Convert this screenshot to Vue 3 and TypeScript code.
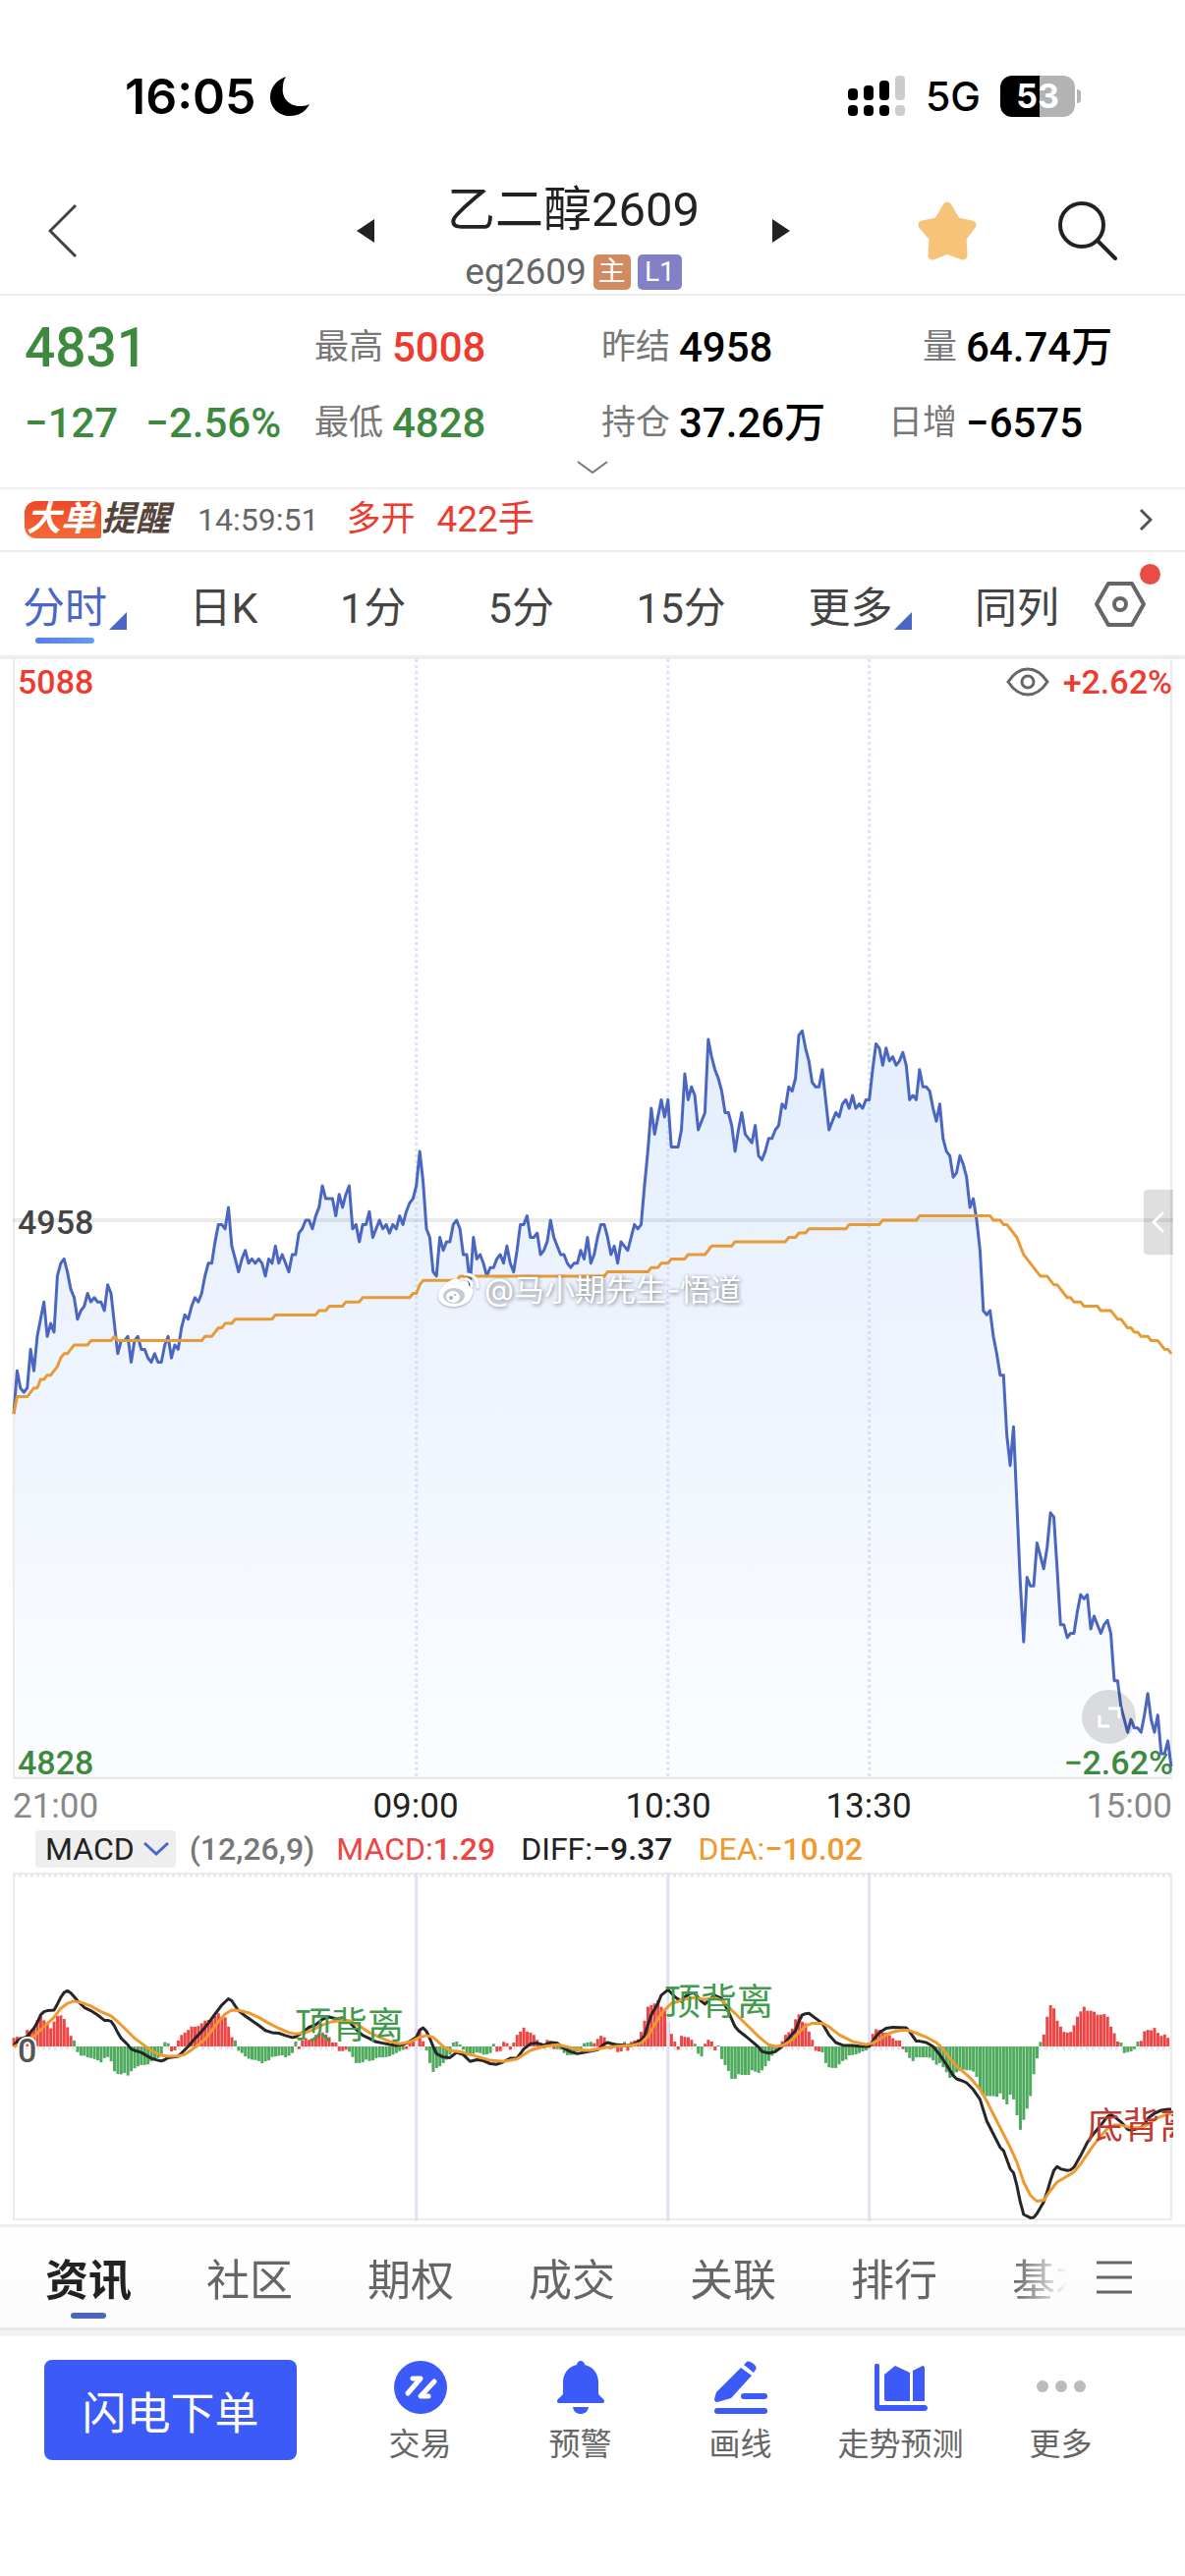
<script setup lang="ts">
import { ref } from 'vue'

interface Quote { label: string; value: string; tone: 'up' | 'down' | 'flat' }

const quotesTop: Quote[] = [
  { label: '最高', value: '5008', tone: 'up' },
  { label: '昨结', value: '4958', tone: 'flat' },
  { label: '量', value: '64.74万', tone: 'flat' },
]
const quotesBottom: Quote[] = [
  { label: '最低', value: '4828', tone: 'down' },
  { label: '持仓', value: '37.26万', tone: 'flat' },
  { label: '日增', value: '−6575', tone: 'flat' },
]

const periods = ['分时', '日K', '1分', '5分', '15分', '更多', '同列']
const activePeriod = ref('分时')
const sections = ['资讯', '社区', '期权', '成交', '关联', '排行', '基本']
const activeSection = ref('资讯')

// Minute-by-minute price, as an offset from the previous settlement.
const prices: number[] = [
  -45, -35, -39, -40, -39, -30, -35, -27, -23, -19, -27, -24, -26, -13, -10, -9, -12, -16, -18, -23,
  -21, -20, -17, -19, -18, -19, -19, -21, -15, -17, -24, -31, -28, -28, -27, -33, -28, -27, -30, -30,
  -32, -33, -31, -33, -33, -29, -27, -32, -29, -30, -25, -22, -23, -20, -18, -19, -17, -13, -10, -10,
  -5, -1, -1, -2, 3, -6, -9, -12, -9, -7, -10, -9, -10, -9, -10, -13, -9, -10, -6, -10,
  -8, -10, -12, -8, -8, -3, -2, 0, 0, -2, 1, 3, 8, 5, 5, 5, 1, 6, 3, 6,
  8, -2, -1, -5, -1, -1, 2, -4, -2, 0, -2, -1, -3, -1, -2, 1, -1, 2, 4, 5,
  8, 16, 9, -2, -4, -12, -13, -4, -7, -5, -5, -1, 0, -2, -8, -8, -15, -4, -9, -8,
  -10, -13, -11, -11, -9, -8, -10, -6, -10, -12, -7, -1, -1, 1, -4, -4, -3, -8, -7, -5,
  0, -4, -6, -8, -8, -10, -11, -10, -10, -7, -9, -4, -10, -8, -4, -1, -1, -4, -8, -6,
  -10, -5, -6, -7, -4, -1, -2, -1, 8, 16, 26, 20, 24, 28, 24, 28, 17, 17, 17, 21,
  34, 28, 31, 29, 21, 23, 25, 42, 38, 35, 33, 30, 25, 25, 22, 16, 21, 25, 20, 19,
  18, 22, 15, 14, 16, 19, 19, 21, 22, 27, 26, 31, 30, 33, 43, 44, 40, 37, 32, 31,
  31, 35, 28, 21, 23, 25, 24, 27, 28, 26, 29, 26, 27, 26, 28, 28, 35, 41, 40, 36,
  40, 37, 38, 36, 37, 39, 36, 28, 29, 28, 35, 31, 31, 30, 26, 23, 27, 19, 16, 15,
  10, 11, 15, 13, 10, 3, 5, 0, -7, -21, -22, -21, -27, -31, -36, -36, -50, -57, -48, -66,
  -84, -98, -83, -85, -85, -75, -78, -81, -76, -68, -69, -81, -94, -94, -97, -96, -96, -91, -87, -88,
  -87, -95, -92, -94, -96, -94, -93, -96, -107, -107, -113, -116, -119, -116, -118, -118, -119, -115, -110, -116,
  -119, -115, -124, -124, -121, -127,
]

type Knot = [number, number]

const average: Knot[] = [
  [0, -45], [1, -41], [4, -41], [5, -40], [6, -39], [7, -39], [8, -37], [9, -37], [10, -36], [11, -36], [12, -35],
  [13, -34], [14, -32], [15, -31], [16, -31], [17, -30], [18, -29], [22, -29], [23, -28], [29, -28], [30, -27], [31, -28],
  [56, -28], [57, -27], [59, -27], [60, -26], [61, -25], [62, -25], [63, -24], [65, -24], [66, -23], [77, -23], [78, -22],
  [90, -22], [91, -21], [93, -21], [94, -20], [98, -20], [99, -19], [103, -19], [104, -18], [118, -18], [119, -17],
  [120, -17], [121, -15], [122, -14], [132, -14], [133, -13], [176, -13], [177, -12], [189, -12], [190, -11], [192, -11],
  [193, -10], [195, -10], [196, -9], [200, -9], [201, -8], [206, -8], [207, -7], [208, -6], [214, -6], [215, -5],
  [230, -5], [231, -4], [233, -4], [234, -3], [236, -3], [237, -2], [248, -2], [249, -1], [258, -1], [259, 0], [269, 0],
  [270, 1], [291, 1], [292, 0], [294, 0], [295, -1], [296, -1], [297, -2], [298, -3], [299, -4], [300, -6], [301, -8],
  [302, -9], [303, -10], [304, -11], [305, -12], [306, -13], [308, -13], [309, -14], [310, -15], [311, -15], [312, -16],
  [313, -17], [314, -18], [315, -18], [316, -19], [318, -19], [319, -20], [323, -20], [324, -21], [327, -21], [328, -22],
  [329, -23], [330, -23], [331, -24], [332, -25], [333, -25], [334, -26], [335, -26], [336, -27], [338, -27], [339, -28],
  [341, -28], [342, -29], [343, -30], [344, -30], [345, -31],
]

// MACD histogram, one bar a minute.
const bars: number[] = [
  26, 29, 29, 30, 50, 42, 57, 80, 92, 79, 68, 55, 75, 92, 94, 83, 58, 32, 18, -17,
  -28, -28, -33, -35, -38, -42, -48, -35, -32, -45, -75, -83, -84, -80, -88, -75, -66, -60, -56, -56,
  -54, -45, -42, -35, -22, 13, 10, -15, -12, 18, 35, 42, 50, 60, 60, 62, 70, 78, 80, 80,
  92, 100, 90, 88, 60, 28, 18, -13, -20, -30, -37, -40, -41, -44, -51, -45, -42, -32, -30, -28,
  -27, -33, -28, -20, 15, -8, 18, 25, 20, 22, 35, 38, 42, 36, 28, 12, 12, -14, -14, -10,
  -16, -32, -50, -50, -48, -40, -44, -42, -36, -33, -33, -32, -30, -25, -20, -14, -10, -8, 12, 20,
  54, 50, 16, -12, -50, -77, -65, -60, -50, -40, -25, 12, 15, 6, -10, -28, -28, -22, -18, -20,
  -25, -24, -20, 8, -16, -14, 14, 10, -10, 12, 35, 45, 57, 45, 42, 35, 20, 10, -6, 20,
  16, -8, -8, -10, -20, -26, -26, -25, -15, -10, 10, 12, 14, 10, 23, 32, 28, -5, -8, 12,
  -17, -15, 14, -13, 14, 18, 22, 44, 78, 120, 125, 130, 140, 120, 112, 72, 38, 15, -10, 32,
  29, 28, 20, 8, -22, -30, 8, 20, 15, -12, 3, -38, -56, -74, -98, -98, -84, -86, -86, -86,
  -72, -76, -80, -72, -60, -44, -28, -15, -5, 16, 35, 43, 54, 82, 97, 75, 70, 45, 20, -13,
  -15, -18, -50, -63, -65, -65, -54, -44, -40, -27, -26, -24, -20, -15, -12, -5, 38, 52, 50, 42,
  42, 34, 25, 18, 18, -8, -18, -35, -44, -33, -33, -33, -33, -34, -42, -55, -50, -63, -78, -95,
  -92, -78, -74, -70, -72, -72, -76, -92, -130, -148, -150, -150, -150, -152, -142, -160, -175, -146, -160, -208,
  -252, -222, -188, -150, -84, -36, 14, 36, 90, 125, 115, 78, 60, 44, 42, 44, 64, 90, 106, 120,
  108, 108, 105, 96, 96, 98, 90, 60, 40, 15, 12, -20, -17, -15, -8, 15, 17, 46, 50, 49,
  56, 41, 32, 36, 26,
]
const turning = new Set([
  18, 45, 46, 47, 48, 66, 84, 85, 97, 98, 99, 117, 131, 132, 133, 143, 144, 145, 148, 161, 170, 171, 172, 178, 179,
  180, 181, 182, 183, 198, 203, 209, 210, 239, 240, 265, 306, 330, 335,
])

const diff: Knot[] = [
  [0, 3], [1, 15], [2, 22], [4, 30], [5, 43], [6, 55], [7, 72], [8, 95], [9, 105], [10, 108], [12, 110], [13, 128],
  [14, 148], [15, 163], [16, 168], [17, 162], [18, 150], [19, 138], [20, 128], [21, 118], [23, 108], [25, 95], [27, 79],
  [28, 79], [29, 76], [30, 62], [31, 42], [32, 25], [34, 5], [35, -8], [36, -12], [38, -18], [41, -36], [43, -42],
  [44, -44], [45, -40], [46, -34], [49, -30], [50, -20], [52, 0], [54, 24], [56, 45], [58, 70], [60, 98], [62, 125],
  [64, 144], [65, 138], [66, 122], [67, 108], [69, 92], [71, 78], [73, 64], [75, 48], [77, 42], [79, 40], [81, 33],
  [83, 27], [84, 29], [86, 42], [88, 58], [90, 66], [92, 82], [94, 89], [96, 84], [98, 82], [100, 74], [102, 52],
  [104, 34], [106, 24], [108, 14], [110, 10], [112, 6], [114, 3], [116, 5], [118, 15], [120, 28], [121, 50], [122, 56],
  [123, 46], [124, 25], [125, 0], [126, -22], [128, -32], [130, -34], [132, -18], [134, -25], [136, -45], [138, -40],
  [140, -43], [142, -52], [144, -54], [146, -46], [148, -36], [150, -35], [152, -8], [154, 8], [156, 10], [158, 4],
  [160, 12], [162, 10], [164, -6], [166, -16], [168, -22], [170, -18], [172, -14], [174, -10], [176, 8], [177, 12],
  [179, 6], [182, 4], [184, 3], [186, 14], [187, 20], [188, 32], [189, 65], [190, 95], [192, 130], [193, 155],
  [195, 171], [196, 162], [197, 150], [199, 136], [200, 150], [202, 162], [203, 160], [205, 136], [206, 128],
  [208, 148], [209, 154], [211, 145], [213, 105], [215, 60], [216, 48], [218, 32], [220, 15], [222, -2], [223, -15],
  [225, -20], [227, -16], [229, 0], [231, 25], [233, 48], [234, 75], [235, 95], [236, 99], [237, 100], [239, 85],
  [241, 70], [243, 35], [245, 12], [247, 4], [250, 3], [252, 1], [255, 0], [257, 30], [258, 42], [260, 55], [262, 58],
  [264, 57], [266, 56], [267, 45], [269, 16], [270, 16], [272, 12], [274, 0], [276, -25], [278, -55], [280, -88],
  [281, -98], [283, -105], [284, -110], [286, -130], [288, -160], [290, -225], [292, -265], [294, -305], [295, -315],
  [297, -370], [298, -382], [299, -420], [300, -470], [301, -508], [303, -518], [304, -517], [305, -505], [307, -470],
  [308, -440], [309, -405], [310, -375], [311, -363], [312, -370], [314, -375], [315, -373], [316, -365], [318, -330],
  [320, -290], [322, -262], [324, -238], [326, -212], [327, -207], [328, -212], [330, -228], [332, -250], [333, -253],
  [336, -246], [337, -235], [338, -218], [340, -202], [342, -193], [344, -190], [345, -190],
]
const dea: Knot[] = [
  [0, 0], [3, 10], [6, 30], [9, 60], [12, 88], [14, 115], [16, 130], [18, 137], [20, 133], [23, 122], [26, 105],
  [29, 92], [31, 75], [34, 45], [36, 25], [38, 10], [40, -5], [42, -18], [44, -27], [46, -30], [49, -29], [51, -24],
  [53, -10], [55, 5], [57, 22], [59, 48], [61, 75], [63, 98], [65, 110], [67, 109], [70, 102], [73, 88], [76, 70],
  [79, 55], [82, 42], [84, 38], [87, 42], [89, 50], [92, 65], [95, 75], [98, 79], [100, 78], [103, 62], [106, 42],
  [109, 28], [112, 15], [115, 8], [118, 13], [121, 28], [123, 33], [125, 28], [128, 0], [130, -12], [132, -15],
  [134, -18], [138, -30], [142, -42], [146, -45], [150, -38], [154, -12], [158, 0], [162, 5], [166, -4], [170, -12],
  [172, -12], [176, -4], [180, 1], [184, 3], [187, 10], [189, 30], [191, 65], [193, 100], [195, 120], [196, 130],
  [198, 136], [200, 143], [203, 148], [206, 142], [209, 147], [211, 140], [213, 120], [216, 90], [219, 60], [222, 30],
  [225, 5], [227, 0], [229, 2], [232, 20], [234, 42], [236, 62], [238, 70], [241, 70], [243, 60], [246, 35], [250, 15],
  [254, 6], [256, 10], [258, 22], [261, 40], [263, 46], [265, 50], [267, 48], [269, 40], [272, 28], [275, 12],
  [277, -8], [279, -35], [281, -60], [284, -85], [286, -105], [288, -130], [290, -165], [293, -225], [295, -265],
  [297, -305], [299, -350], [301, -410], [303, -450], [305, -468], [307, -465], [309, -435], [311, -410], [313, -398],
  [316, -380], [318, -355], [321, -310], [324, -270], [326, -248], [328, -238], [330, -238], [333, -246], [336, -246],
  [338, -235], [341, -215], [345, -202],
]

const MINUTES = 345
const LEFT = 14
const WIDTH = 1178
const x = (minute: number): number => LEFT + (minute * WIDTH) / MINUTES
const priceY = (offset: number): number => 571 - offset * 4.38
const macdY = (value: number): number => 179 - value / 2.97

const pts = (knots: Knot[], y: (v: number) => number): string =>
  knots.map(([m, v]) => `${x(m).toFixed(1)},${y(v).toFixed(1)}`).join(' ')

const priceLine = pts(prices.map((p, i): Knot => [i, p]), priceY)
const priceArea = `${x(0)},1139 ${priceLine} ${x(MINUTES)},1139`
const averageLine = pts(average, priceY)
const diffLine = pts(diff, macdY)
const deaLine = pts(dea, macdY)

const sessions = [120, 195, 255].map(x)

const histogram = bars.map((v, i) => ({
  x: x(i) - 1.4,
  y: Math.min(macdY(v), macdY(0)),
  height: Math.abs(v) / 2.97,
  up: v > 0 !== turning.has(i),
}))
</script>

<template>
  <main class="page">
    <div class="status">
      <div class="clock">
        <time>16:05</time>
        <svg width="40" height="42" viewBox="0 0 40 42"><path d="M16 1C5 5 0 13 0 22c0 11 9 19 20 19 9 0 16-4 20-12-4 2-7 2-10 2C19 31 11 22 13 11c0-4 1-7 3-10z" /></svg>
      </div>
      <div class="signals">
        <svg width="60" height="42" viewBox="0 0 60 42">
          <rect x="0" y="13" width="10" height="12" rx="4" /><rect x="16" y="10" width="10" height="15" rx="4" />
          <rect x="32" y="5" width="10" height="20" rx="4" /><rect x="48" y="0" width="10" height="25" rx="4" fill="#ccc" />
          <rect x="0" y="30" width="10" height="11" rx="4" /><rect x="16" y="30" width="10" height="11" rx="4" />
          <rect x="32" y="30" width="10" height="11" rx="4" /><rect x="48" y="30" width="10" height="11" rx="4" fill="#ccc" />
        </svg>
        <span class="network">5G</span>
        <span class="battery">53</span>
      </div>
    </div>

    <header class="header">
      <button class="icon-btn back" aria-label="返回">
        <svg width="30" height="56" viewBox="0 0 30 56"><path d="M28 2 2 28l26 26" fill="none" stroke="#444" stroke-width="3" /></svg>
      </button>
      <button class="icon-btn prev" aria-label="上一个">
        <svg width="18" height="24" viewBox="0 0 18 24"><path d="M18 0v24L0 12z" fill="#222" /></svg>
      </button>
      <div class="name">
        <h1>乙二醇2609</h1>
        <p><span>eg2609</span><b class="badge main">主</b><b class="badge level">L1</b></p>
      </div>
      <button class="icon-btn next" aria-label="下一个">
        <svg width="18" height="24" viewBox="0 0 18 24"><path d="M0 0v24l18-12z" fill="#222" /></svg>
      </button>
      <button class="icon-btn star" aria-label="自选">
        <svg width="60" height="60" viewBox="0 0 60 60"><path d="M30 5 39.500 21 55 24 45 37 46 55 30 49 15 55 16 37 5 24 20.500 21z" fill="#f6c379" stroke="#f6c379" stroke-width="9" stroke-linejoin="round" /></svg>
      </button>
      <button class="icon-btn search" aria-label="搜索">
        <svg width="62" height="62" viewBox="0 0 62 62" fill="none" stroke="#222" stroke-width="4" stroke-linecap="round"><circle cx="25" cy="25" r="22" /><path d="m41 41 18 18" /></svg>
      </button>
    </header>

    <section class="quote">
      <strong class="last down">4831</strong>
      <div v-for="q in quotesTop" :key="q.label" class="cell"><span>{{ q.label }}</span><b :class="q.tone">{{ q.value }}</b></div>
      <p class="change down"><span>−127</span><span>−2.56%</span></p>
      <div v-for="q in quotesBottom" :key="q.label" class="cell"><span>{{ q.label }}</span><b :class="q.tone">{{ q.value }}</b></div>
      <button class="icon-btn expand" aria-label="展开">
        <svg width="34" height="14" viewBox="0 0 34 14"><path d="m2 1 15 11L32 1" fill="none" stroke="#777" stroke-width="2" /></svg>
      </button>
    </section>

    <a class="alert" href="#orders">
      <em class="tag">大单</em><em class="tag-tail">提醒</em>
      <time>14:59:51</time>
      <span class="side">多开</span><span class="lots">422手</span>
      <svg width="14" height="22" viewBox="0 0 14 22"><path d="m2 1 10 10L2 21" fill="none" stroke="#555" stroke-width="3" /></svg>
    </a>

    <nav class="periods">
      <div class="period-list">
        <button
          v-for="p in periods" :key="p"
          :class="{ active: p === activePeriod, menu: p === '分时' || p === '更多' }"
          @click="activePeriod = p"
        >{{ p }}</button>
      </div>
      <button class="icon-btn settings" aria-label="设置">
        <svg width="52" height="46" viewBox="0 0 52 46" fill="none" stroke="#666" stroke-width="4" stroke-linejoin="round"><path d="M14 2h24l12 21-12 21H14L2 23z" /><circle cx="26" cy="23" r="6" /></svg>
      </button>
    </nav>

    <section class="price-chart">
      <svg class="plot" viewBox="0 0 1206 1140">
        <defs>
          <linearGradient id="fill" x1="0" y1="0" x2="0" y2="1">
            <stop offset="0" stop-color="#e4eefd" /><stop offset="0.500" stop-color="#eff5fe" /><stop offset="1" stop-color="#fcfdff" />
          </linearGradient>
        </defs>
        <polygon :points="priceArea" fill="url(#fill)" />
        <path d="M14 0V1139M1192 0V1139" stroke="#ececee" stroke-width="2" />
        <path d="M13 1139H1193" stroke="#e8eaf0" stroke-width="3" />
        <path d="M13 571H1194" stroke="#000" stroke-opacity="0.080" stroke-width="4" />
        <path v-for="s in sessions" :key="s" :d="`M${s} 0V1138`" stroke="#c3caf2" stroke-opacity="0.550" stroke-width="3" stroke-dasharray="3 3" />
        <polyline :points="priceLine" fill="none" stroke="#4a66c2" stroke-width="3" stroke-linejoin="round" />
        <polyline :points="averageLine" fill="none" stroke="#e89a35" stroke-width="3" stroke-linejoin="round" />
      </svg>
      <span class="mark top-left up">5088</span>
      <span class="mark top-right up">
        <svg width="44" height="30" viewBox="0 0 44 30" fill="none" stroke="#666" stroke-width="3"><path d="M2 15C8 6 14 2 22 2s14 4 20 13c-6 9-12 13-20 13S8 24 2 15z" /><circle cx="22" cy="15" r="6" /></svg>
        +2.62%
      </span>
      <span class="mark mid-left">4958</span>
      <span class="mark bottom-left down">4828</span>
      <button class="icon-btn fullscreen" aria-label="全屏">
        <svg width="55" height="55" viewBox="0 0 55 55"><circle cx="27.500" cy="27.500" r="27.500" fill="#000" fill-opacity="0.130" /><path d="M27 19h11v10M18 26v11h10" fill="none" stroke="#fff" stroke-width="3" /></svg>
      </button>
      <span class="mark bottom-right down">−2.62%</span>
      <button class="icon-btn drawer" aria-label="盘口">
        <svg width="14" height="24" viewBox="0 0 14 24"><path d="M12 2 2 12l10 10" fill="none" stroke="#fff" stroke-width="3" /></svg>
      </button>
      <span class="watermark">
        <svg width="44" height="36" viewBox="0 0 44 36">
          <path d="M14 8c5-3 9-2 9 2 5-2 10-1 9 4 4 1 5 4 4 8-2 8-10 13-19 13C8 35 1 31 1 24 1 18 8 11 14 8z" fill="#fff" />
          <ellipse cx="17" cy="24" rx="11" ry="8" fill="#c5cad2" /><ellipse cx="16" cy="25" rx="7" ry="6" fill="#fff" />
          <circle cx="14" cy="26" r="2" fill="#aab0ba" /><circle cx="18" cy="23" r="1" fill="#aab0ba" />
          <path d="M29 7c4 0 6 3 6 7M28 2c8-1 14 5 13 13" fill="none" stroke="#fff" stroke-width="3" stroke-linecap="round" />
        </svg>
        @马小期先生-悟道
      </span>
    </section>

    <div class="axis">
      <span class="edge">21:00</span><span>09:00</span><span>10:30</span><span>13:30</span><span class="edge end">15:00</span>
    </div>

    <div class="indicator">
      <button class="picker">MACD
        <svg width="28" height="16" viewBox="0 0 28 16"><path d="m2 2 12 11L26 2" fill="none" stroke="#4a66c8" stroke-width="3" /></svg>
      </button>
      <span class="params">(12,26,9)</span>
      <span class="macd">MACD:<b>1.29</b></span>
      <span class="diff">DIFF:<b>−9.37</b></span>
      <span class="dea">DEA:<b>−10.02</b></span>
    </div>

    <section class="macd-chart">
      <svg class="plot" viewBox="0 0 1206 360">
        <path d="M13 3H1193M13 355H1193" stroke="#ececec" stroke-width="2" />
        <path d="M13 5H1193M13 181H1193" stroke="#e8e8e8" stroke-width="3" stroke-dasharray="3 3" />
        <path d="M14 3V355M1192 3V355" stroke="#ececee" stroke-width="2" />
        <rect v-for="(b, i) in histogram" :key="i" :x="b.x" :y="b.y" width="3" :height="b.height" :fill="b.up ? '#ee4444' : '#4eaa5c'" />
        <path v-for="s in sessions" :key="s" :d="`M${s} 2V357`" stroke="#dde2f4" stroke-width="3" />
        <polyline :points="diffLine" fill="none" stroke="#262626" stroke-width="3" stroke-linejoin="round" />
        <polyline :points="deaLine" fill="none" stroke="#f0992f" stroke-width="3" stroke-linejoin="round" />
        <text x="300" y="171" class="signal" fill="#419b4c">顶背离</text>
        <text x="676" y="147" class="signal" fill="#419b4c">顶背离</text>
        <svg x="0" y="0" width="1194" height="360"><text x="1106" y="273" class="signal" fill="#c03a34">底背离</text></svg>
        <text x="18" y="195" class="zero">0</text>
      </svg>
    </section>

    <nav class="sections">
      <div class="section-list">
        <button v-for="s in sections" :key="s" :class="{ active: s === activeSection }" @click="activeSection = s">{{ s }}</button>
      </div>
      <button class="icon-btn all" aria-label="全部栏目">
        <svg width="36" height="34" viewBox="0 0 36 34"><path d="M0 2h36M0 17h36M0 32h36" stroke="#666" stroke-width="3" /></svg>
      </button>
    </nav>

    <footer class="toolbar">
      <button class="order">闪电下单</button>
      <div class="tools">
        <button class="tool">
          <svg width="56" height="56" viewBox="0 0 56 56"><circle cx="28" cy="28" r="27" fill="#3b5af8" /><path d="M20 19h8L15 34M42 22 28 37h8" fill="none" stroke="#fff" stroke-width="5" stroke-linecap="round" stroke-linejoin="round" /></svg>交易
        </button>
        <button class="tool">
          <svg width="56" height="56" viewBox="0 0 56 56" fill="#3b5af8"><path d="M28 1c2 0 4 2 4 4 9 2 14 9 14 18v11c0 3 6 5 6 8 0 2-1 2-3 2H7c-2 0-3 0-3-2 0-3 6-5 6-8V23c0-9 5-16 14-18 0-2 2-4 4-4zM20 48h16c-1 5-4 7-8 7s-7-2-8-7z" /></svg>预警
        </button>
        <button class="tool">
          <svg width="56" height="56" viewBox="0 0 56 56" fill="#3b5af8"><path d="M28 8 39 16 18 39 4 43c-2 0-3-1-3-3L3 33zM31 5l3-3c3-2 12 4 9 8l-2 3z" /><rect x="28" y="34" width="27" height="6" rx="3" /><rect x="1" y="49" width="54" height="6" rx="3" /></svg>画线
        </button>
        <button class="tool">
          <svg width="56" height="56" viewBox="0 0 56 56" fill="#3b5af8"><path d="M1 6c0-3 5-3 5 0v40h46c4 0 4 6 0 6H4c-2 0-3-1-3-3z" /><path d="M11 15 22 6l15 7v29H13c-1 0-2-1-2-2zM40 11l10-5c1 0 2 1 2 2v34H40z" /></svg>走势预测
        </button>
        <button class="tool">
          <svg width="56" height="56" viewBox="0 0 56 56" fill="#bbb"><circle cx="9" cy="27" r="6" /><circle cx="28" cy="27" r="6" /><circle cx="47" cy="27" r="6" /></svg>更多
        </button>
      </div>
    </footer>
  </main>
</template>

<style>
body { margin: 0; background: #fff; }
</style>

<style scoped>
.page {
  font-family: Roboto, "Noto Sans CJK SC", sans-serif;
  background: #fff;
  color: #222;
  overflow: hidden;
  padding-bottom: 96px;
}
button { border: 0; padding: 0; margin: 0; background: none; font: inherit; color: inherit; }
h1, p { margin: 0; font-weight: 400; }
svg { display: block; flex: none; }
.icon-btn { display: flex; align-items: center; justify-content: center; }
.up { color: #ed3b2f; }
.down { color: #3d8a3f; }
.flat { color: #000; }

.status {
  display: flex;
  justify-content: space-between;
  align-items: center;
  padding: 72px 112px 46px 127px;
  font-family: Inter, sans-serif;
  color: #000;
  line-height: 52px;
}
.clock, .signals { display: flex; align-items: center; }
.clock { gap: 14px; font-size: 50px; font-weight: 600; }
.network { margin: 0 20px 0 19px; font-size: 41px; font-weight: 500; }
.battery {
  position: relative;
  width: 76px;
  height: 42px;
  border-radius: 12px;
  background: linear-gradient(90deg, #000 40px, #b3b3b3 40px);
  color: #fff;
  font-size: 34px;
  font-weight: 700;
  line-height: 42px;
  text-align: center;
}
.battery::after {
  content: "";
  position: absolute;
  left: 78px;
  top: 14px;
  width: 4px;
  height: 14px;
  border-radius: 0 4px 4px 0;
  background: #b3b3b3;
}

.header {
  display: flex;
  align-items: center;
  height: 129px;
  padding: 0 68px 0 49px;
  border-bottom: 2px solid #ececec;
}
.back { margin-right: auto; }
.name { width: 405px; text-align: center; }
.name h1 { font-size: 49px; line-height: 84px; }
.name p {
  display: flex;
  justify-content: center;
  align-items: center;
  gap: 7px;
  font-size: 37px;
  line-height: 42px;
  color: #666;
}
.badge {
  height: 36px;
  padding: 0 5px;
  border-radius: 5px;
  color: #fff;
  font-size: 28px;
  font-weight: 400;
  line-height: 36px;
}
.main { background: #d48a60; }
.level { padding: 0 7px; background: #8281c5; }
.star { margin-left: 130px; }
.search { margin-left: 82px; }

.quote {
  display: grid;
  grid-template-columns: 295fr 292fr 296fr 273fr;
  grid-template-rows: 77px 77px 27px;
  align-items: center;
  padding: 14px 25px 0;
  border-bottom: 2px solid #efefef;
}
.last { font-size: 55px; font-weight: 500; }
.change { display: flex; gap: 28px; font-size: 42px; font-weight: 500; }
.cell { display: flex; align-items: center; font-size: 42px; line-height: 60px; }
.cell span { width: 70px; margin-right: 9px; font-size: 35px; color: #777; text-align: right; }
.cell:nth-child(4n) { margin-left: -4px; }
.cell b { font-weight: 500; }
.expand { grid-column: 1 / -1; align-self: start; }

.alert {
  display: flex;
  align-items: center;
  height: 62px;
  padding: 0 33px 0 25px;
  border-bottom: 2px solid #ececec;
  font-size: 35px;
  line-height: 38px;
  color: #ed3b2f;
  text-decoration: none;
}
.alert em { font-weight: 700; }
.tag {
  padding: 0 6px 0 2px;
  border-radius: 12px 8px 2px 12px;
  background: linear-gradient(#ee4826, #f26a38);
  color: #fff;
}
.tag-tail { color: #54443a; }
.alert time { margin: 0 28px; font-size: 32px; color: #666; }
.lots { margin-left: 22px; font-size: 37px; }
.alert svg { margin-left: auto; }

.periods {
  display: flex;
  align-items: center;
  height: 105px;
  padding: 0 40px 0 23px;
  border-bottom: 4px solid #ededed;
  font-size: 43px;
  color: #444;
}
.period-list { flex: 1; display: flex; justify-content: space-between; }
.period-list button { position: relative; height: 105px; }
.period-list .active { color: #4a66c8; }
.period-list .active::before {
  content: "";
  position: absolute;
  left: 13px;
  bottom: 12px;
  width: 60px;
  height: 6px;
  border-radius: 3px;
  background: linear-gradient(90deg, #5a7af5, #5f9cf7);
}
.period-list .menu::after {
  content: "";
  position: absolute;
  right: -20px;
  bottom: 26px;
  border-left: 18px solid transparent;
  border-bottom: 18px solid #4a66c8;
}
.settings { position: relative; margin-left: 36px; }
.settings::after {
  content: "";
  position: absolute;
  right: -15px;
  top: -18px;
  width: 21px;
  height: 21px;
  border-radius: 50%;
  background: #e84c45;
}

.price-chart, .macd-chart { position: relative; }
.plot { width: 100%; height: auto; }
.mark {
  position: absolute;
  display: flex;
  align-items: center;
  gap: 14px;
  font-size: 34px;
  font-weight: 500;
  line-height: 40px;
}
.top-left { left: 18px; top: 3px; }
.top-right { right: 13px; top: 3px; }
.mid-left { left: 18px; top: 50%; color: #444; margin-top: -17px; }
.bottom-left { left: 18px; bottom: -3px; }
.bottom-right { right: 12px; bottom: -3px; }
.fullscreen { position: absolute; right: 50px; bottom: 36px; }
.drawer {
  position: absolute;
  right: 12px;
  top: 50%;
  width: 30px;
  height: 66px;
  margin-top: -30px;
  border-radius: 4px 0 0 4px;
  background: rgba(0, 0, 0, 0.13);
}
.watermark {
  position: absolute;
  left: 445px;
  top: 620px;
  display: flex;
  align-items: center;
  gap: 4px;
  color: #fff;
  font-family: Inter, "Noto Sans CJK SC", sans-serif;
  font-size: 31px;
  line-height: 44px;
  text-shadow: 1px 1px 4px rgba(0, 0, 0, 0.5);
}
.watermark svg { filter: drop-shadow(0 1px 1px rgba(0, 0, 0, 0.3)); }

.axis {
  display: grid;
  grid-template-columns: 281fr 258fr 256fr 152fr 233fr;
  padding: 3px 13px 0;
  font-size: 35px;
  line-height: 49px;
  text-align: center;
}
.axis .edge { color: #888; text-align: left; }
.axis .end { text-align: right; }

.indicator {
  display: flex;
  align-items: center;
  height: 38px;
  padding-left: 36px;
  font-size: 32px;
  line-height: 38px;
}
.indicator b { font-weight: 500; }
.picker { display: flex; align-items: center; gap: 8px; height: 38px; padding: 0 6px 0 10px; border-radius: 4px; background: #eee; }
.params { margin: 0 22px 0 14px; font-weight: 500; color: #777; }
.macd { color: #ef4444; }
.diff { margin: 0 26px; }
.dea { color: #f0992f; }
.macd-chart { padding-top: 3px; }
.signal { font-size: 37px; }
.zero { font-size: 34px; font-weight: 500; fill: #555; paint-order: stroke; stroke: #fff; stroke-width: 4px; }

.sections {
  display: flex;
  align-items: center;
  height: 102px;
  padding: 0 54px 0 46px;
  border-top: 3px solid #ececec;
  border-bottom: 3px solid #e9eaeb;
  background: linear-gradient(#fff, #fbfbfb);
  font-size: 44px;
  color: #666;
}
.section-list {
  flex: 1;
  display: flex;
  gap: 76px;
  overflow: hidden;
  white-space: nowrap;
  -webkit-mask-image: linear-gradient(90deg, #000 calc(100% - 84px), transparent calc(100% - 30px));
  mask-image: linear-gradient(90deg, #000 calc(100% - 84px), transparent calc(100% - 30px));
}
.section-list button { position: relative; flex: none; height: 102px; }
.section-list .active { color: #222; font-weight: 700; }
.section-list .active::after {
  content: "";
  position: absolute;
  left: 26px;
  bottom: 9px;
  width: 36px;
  height: 6px;
  border-radius: 3px;
  background: #4b66c0;
}

.toolbar {
  display: flex;
  padding: 24px 45px 0;
  border-top: 6px solid #f2f3f4;
}
.order { width: 257px; height: 102px; border-radius: 8px; background: #3b5af8; color: #fff; font-size: 45px; }
.tools { flex: 1; display: flex; margin-left: 44px; }
.tool { flex: 1; display: flex; flex-direction: column; align-items: center; gap: 10px; font-size: 32px; line-height: 40px; color: #666; }
</style>
